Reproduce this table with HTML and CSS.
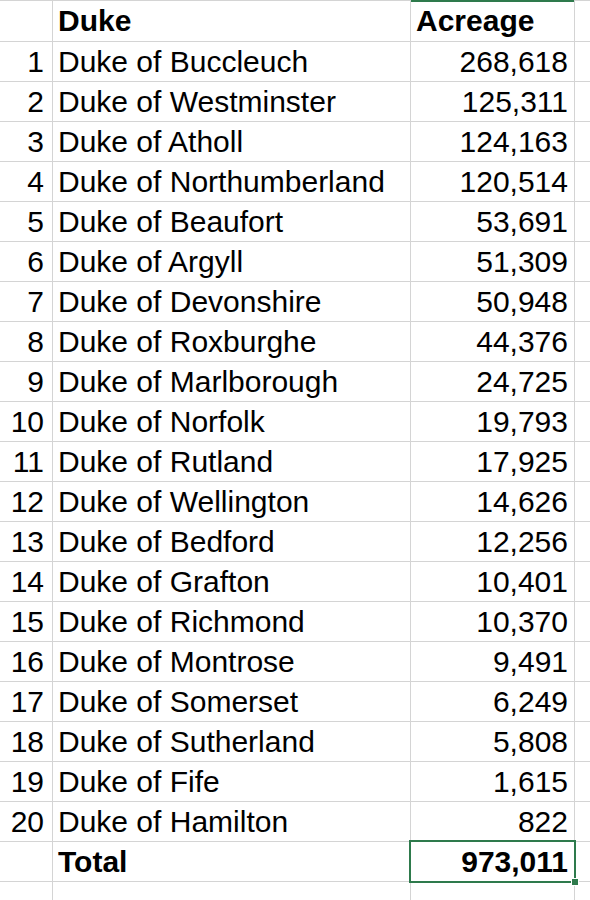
FILE: index.html
```html
<!DOCTYPE html>
<html lang="en">
<head>
<meta charset="utf-8">
<title>Dukes by acreage</title>
<link rel="stylesheet" href="styles.css">
</head>
<body>
<div class="sheet">
  <div class="cell idx"></div><div class="cell name head">Duke</div><div class="cell num head acre-head">Acreage</div><div class="cell pad"></div>
  <div class="cell idx">1</div><div class="cell name">Duke of Buccleuch</div><div class="cell num">268,618</div><div class="cell pad"></div>
  <div class="cell idx">2</div><div class="cell name">Duke of Westminster</div><div class="cell num">125,311</div><div class="cell pad"></div>
  <div class="cell idx">3</div><div class="cell name">Duke of Atholl</div><div class="cell num">124,163</div><div class="cell pad"></div>
  <div class="cell idx">4</div><div class="cell name">Duke of Northumberland</div><div class="cell num">120,514</div><div class="cell pad"></div>
  <div class="cell idx">5</div><div class="cell name">Duke of Beaufort</div><div class="cell num">53,691</div><div class="cell pad"></div>
  <div class="cell idx">6</div><div class="cell name">Duke of Argyll</div><div class="cell num">51,309</div><div class="cell pad"></div>
  <div class="cell idx">7</div><div class="cell name">Duke of Devonshire</div><div class="cell num">50,948</div><div class="cell pad"></div>
  <div class="cell idx">8</div><div class="cell name">Duke of Roxburghe</div><div class="cell num">44,376</div><div class="cell pad"></div>
  <div class="cell idx">9</div><div class="cell name">Duke of Marlborough</div><div class="cell num">24,725</div><div class="cell pad"></div>
  <div class="cell idx">10</div><div class="cell name">Duke of Norfolk</div><div class="cell num">19,793</div><div class="cell pad"></div>
  <div class="cell idx">11</div><div class="cell name">Duke of Rutland</div><div class="cell num">17,925</div><div class="cell pad"></div>
  <div class="cell idx">12</div><div class="cell name">Duke of Wellington</div><div class="cell num">14,626</div><div class="cell pad"></div>
  <div class="cell idx">13</div><div class="cell name">Duke of Bedford</div><div class="cell num">12,256</div><div class="cell pad"></div>
  <div class="cell idx">14</div><div class="cell name">Duke of Grafton</div><div class="cell num">10,401</div><div class="cell pad"></div>
  <div class="cell idx">15</div><div class="cell name">Duke of Richmond</div><div class="cell num">10,370</div><div class="cell pad"></div>
  <div class="cell idx">16</div><div class="cell name">Duke of Montrose</div><div class="cell num">9,491</div><div class="cell pad"></div>
  <div class="cell idx">17</div><div class="cell name">Duke of Somerset</div><div class="cell num">6,249</div><div class="cell pad"></div>
  <div class="cell idx">18</div><div class="cell name">Duke of Sutherland</div><div class="cell num">5,808</div><div class="cell pad"></div>
  <div class="cell idx">19</div><div class="cell name">Duke of Fife</div><div class="cell num">1,615</div><div class="cell pad"></div>
  <div class="cell idx">20</div><div class="cell name">Duke of Hamilton</div><div class="cell num">822</div><div class="cell pad"></div>
  <div class="cell idx"></div><div class="cell name head">Total</div><div class="cell num head total">973,011</div><div class="cell pad"></div>
  <div class="cell idx"></div><div class="cell name"></div><div class="cell num"></div><div class="cell pad"></div>
</div>
</body>
</html>
```
FILE: styles.css
```css
html, body {
  margin: 0;
  padding: 0;
  background: #ffffff;
}

.sheet {
  display: grid;
  grid-template-columns: 52px 357px 163px 15px;
  grid-template-rows: 40px;
  grid-auto-rows: 39px;
  gap: 1px;
  padding-top: 1px;
  background: #d4d4d4;
  width: 590px;
  height: 900px;
  overflow: hidden;
  font-family: "Liberation Sans", Arial, Helvetica, sans-serif;
  font-size: 30px;
  color: #000000;
}

.cell {
  background: #ffffff;
  line-height: 40px;
  white-space: nowrap;
  overflow: visible;
}

.idx {
  text-align: right;
  padding-right: 8px;
}

.name {
  padding-left: 5px;
}

.num {
  text-align: right;
  padding-right: 6px;
}

.head {
  font-weight: bold;
}

.acre-head {
  text-align: left;
  padding-left: 5px;
  padding-right: 0;
  box-shadow: 0 -1px 0 #2e7a4c, inset 0 1px 0 #2e7a4c;
}

.total {
  position: relative;
  z-index: 1;
  outline: 2px solid #2e7a4c;
}

.total::after {
  content: "";
  position: absolute;
  right: -5px;
  bottom: -5px;
  width: 6px;
  height: 6px;
  background: #2e7a4c;
  border: 1px solid #ffffff;
}
```
